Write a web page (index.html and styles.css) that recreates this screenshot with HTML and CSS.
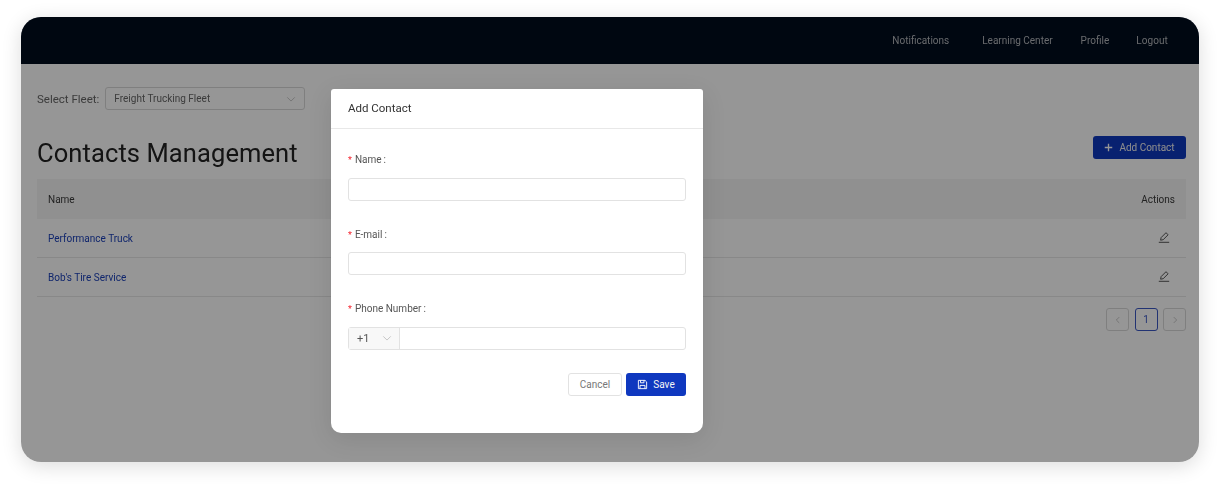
FILE: index.html
```html
<!DOCTYPE html>
<html lang="en">
<head>
<meta charset="utf-8">
<title>Contacts Management</title>
<link rel="stylesheet" href="styles.css">
</head>
<body>
<div class="window">
  <header class="topbar">
    <nav class="nav">
      <a>Notifications</a>
      <a>Learning Center</a>
      <a>Profile</a>
      <a>Logout</a>
    </nav>
  </header>
  <main class="page">
    <div class="fleet">
      <span class="fleet-label">Select Fleet:</span>
      <div class="fleet-select">
        <span>Freight Trucking Fleet</span>
        <svg class="chev" viewBox="0 0 12 12"><path d="M1.5 4l4.5 4.5L10.5 4"/></svg>
      </div>
    </div>
    <div class="title-row">
      <h1>Contacts Management</h1>
      <button class="btn-add">
        <svg class="plus" viewBox="0 0 12 12"><path d="M6 1v10M1 6h10"/></svg>
        Add Contact
      </button>
    </div>
    <div class="table">
      <div class="row head"><span>Name</span><span>Actions</span></div>
      <div class="row">
        <a>Performance Truck</a>
        <svg class="edit" viewBox="0 0 12 12"><path d="M.8 11.3h10.4M2.6 9.2l.5-2.6L8 1.7l2.1 2.1-4.9 4.9z"/></svg>
      </div>
      <div class="row">
        <a>Bob's Tire Service</a>
        <svg class="edit" viewBox="0 0 12 12"><path d="M.8 11.3h10.4M2.6 9.2l.5-2.6L8 1.7l2.1 2.1-4.9 4.9z"/></svg>
      </div>
    </div>
    <div class="pager">
      <span class="pg"><svg viewBox="0 0 12 12"><path d="M7.5 2.5L4 6l3.5 3.5"/></svg></span>
      <span class="pg current">1</span>
      <span class="pg"><svg viewBox="0 0 12 12"><path d="M4.5 2.5L8 6l-3.5 3.5"/></svg></span>
    </div>
  </main>
  <div class="overlay"></div>
  <section class="modal">
    <div class="modal-head">Add Contact</div>
    <form class="modal-body">
      <div class="field">
        <label><i>*</i>Name<b>:</b></label>
        <div class="input"></div>
      </div>
      <div class="field">
        <label><i>*</i>E-mail<b>:</b></label>
        <div class="input"></div>
      </div>
      <div class="field">
        <label><i>*</i>Phone Number<b>:</b></label>
        <div class="input phone">
          <div class="code">
            <span>+1</span>
            <svg class="chev" viewBox="0 0 12 12"><path d="M1.5 4l4.5 4.5L10.5 4"/></svg>
          </div>
        </div>
      </div>
      <div class="actions">
        <button type="button" class="btn-cancel">Cancel</button>
        <button type="button" class="btn-save">
          <svg class="save" viewBox="0 0 12 12"><path d="M1.5 1.5h7.3l1.7 1.7v7.3h-9zM3.8 1.5v2.6h3.8V1.5M3.3 10.5V7h5.4v3.5"/></svg>
          Save
        </button>
      </div>
    </form>
  </section>
</div>
</body>
</html>
```
FILE: styles.css
```css
* { box-sizing: border-box; }
html, body { margin: 0; height: 100%; background: #fff; }
body {
  padding: 17px 21px 25px;
  font-family: Roboto, "Liberation Sans", sans-serif;
  font-size: 10px;
  color: #3a3a3a;
  overflow: hidden;
}
.window {
  position: relative;
  width: 1178px;
  height: 445px;
  border-radius: 20px;
  overflow: hidden;
  background: #fff;
  filter: blur(.5px);
}
body::before {
  content: "";
  position: absolute;
  left: 21px;
  top: 17px;
  width: 1178px;
  height: 445px;
  border-radius: 20px;
  box-shadow: 0 4px 20px rgba(0, 0, 0, .14);
}
.topbar {
  height: 47px;
  background: #000c1e;
  display: flex;
  justify-content: flex-end;
  align-items: center;
  padding: 0 31px 0 0;
}
.nav { display: flex; gap: 28px; }
.nav a { color: #b4b7bb; font-size: 10px; line-height: 14px; white-space: nowrap; }
.nav a:first-child { margin-right: 5px; }
.nav a:last-child { margin-left: -1px; letter-spacing: .1px; }
.page { padding: 23px 13px 0 16px; }
.fleet { display: flex; align-items: center; gap: 6px; height: 23px; }
.fleet-label { font-size: 11.5px; color: #666; }
.fleet-select {
  width: 200px;
  height: 23px;
  border: 1px solid #d9d9d9;
  border-radius: 3px;
  display: flex;
  align-items: center;
  justify-content: space-between;
  padding: 0 8px;
  color: #666;
  font-size: 10px;
}
.chev { width: 10px; height: 10px; fill: none; stroke: #bdbdbd; stroke-width: 1; }
.title-row {
  display: flex;
  justify-content: space-between;
  align-items: center;
  margin-top: 22px;
  height: 40px;
  padding-bottom: 4px;
}
h1 { margin: 6px 0 0; font-weight: 400; font-size: 25.5px; line-height: 34px; color: #222; letter-spacing: .1px; }
.btn-add {
  width: 93px;
  height: 23px;
  margin-top: -6px;
  background: #0f38bf;
  border: 0;
  border-radius: 3px;
  color: #f0f0f0;
  font: inherit;
  display: flex;
  align-items: center;
  justify-content: center;
  gap: 6px;
  white-space: nowrap;
  padding: 0;
}
.plus { width: 9px; height: 9px; fill: none; stroke: #fff; stroke-width: 1.8; }
.table { margin-top: 7px; }
.row {
  display: flex;
  justify-content: space-between;
  align-items: center;
  height: 39px;
  padding: 0 16px 0 11px;
  border-bottom: 1px solid #e8e8e8;
}
.row a { color: #1a3fb8; }
.head { height: 40px; background: #f5f5f5; border-bottom: 0; padding-right: 11px; }
.edit { width: 12px; height: 12px; margin-bottom: 3px; fill: none; stroke: #555; stroke-width: 1; }
.pager { display: flex; justify-content: flex-end; gap: 5.5px; margin-top: 11px; }
.pg {
  width: 23px;
  height: 23px;
  border: 1px solid #d9d9d9;
  border-radius: 3px;
  display: flex;
  align-items: center;
  justify-content: center;
}
.pg svg { width: 10px; height: 10px; fill: none; stroke: #bdbdbd; stroke-width: 1; }
.current { border-color: #3a57c4; color: #3a57c4; }
.overlay { position: absolute; inset: 0; background: rgba(0, 0, 0, .41); }
.modal {
  position: absolute;
  left: 310px;
  top: 72px;
  width: 372px;
  height: 344px;
  background: #fff;
  border-radius: 3px 3px 10px 10px;
  box-shadow: 0 6px 24px rgba(0, 0, 0, .1);
}
.modal-head {
  height: 40px;
  padding: 0 17px 2px;
  display: flex;
  align-items: center;
  border-bottom: 1px solid #e8e8e8;
  font-size: 11.5px;
  color: #333;
}
.modal-body { padding: 24px 17px 0; }
.field { height: 74.5px; }
label { display: block; font-size: 10px; line-height: 14px; color: #555; margin-bottom: 10.5px; }
label i { color: #f5222d; font-style: normal; font-size: 9px; margin-right: 3px; }
label b { font-weight: 400; margin-left: 2px; }
.input { height: 23px; border: 1px solid #e2e2e2; border-radius: 3px; background: #fff; }
.phone { display: flex; }
.code {
  width: 51px;
  height: 100%;
  background: #f8f8f8;
  border-right: 1px solid #e2e2e2;
  display: flex;
  align-items: center;
  justify-content: space-between;
  padding: 0 7px 0 8px;
  color: #555;
  font-size: 11px;
}
.actions { display: flex; justify-content: flex-end; gap: 4px; margin-top: -3.5px; }
.actions button { height: 23px; border-radius: 3px; font: inherit; padding: 0; }
.btn-cancel { width: 54px; background: #fff; border: 1px solid #e2e2e2; color: #777; }
.btn-save {
  width: 60px;
  background: #0f38bf;
  border: 0;
  color: #f5f5f5;
  display: flex;
  align-items: center;
  justify-content: center;
  gap: 5px;
}
.save { width: 11px; height: 11px; fill: none; stroke: #fff; stroke-width: 1; }
```
